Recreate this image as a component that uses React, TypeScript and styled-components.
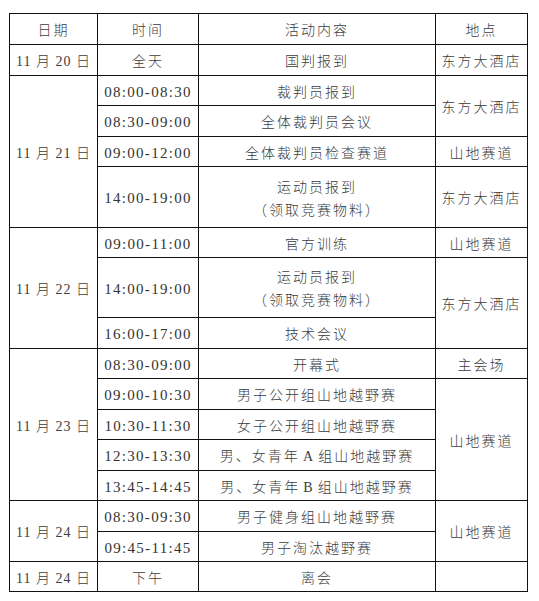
import React from "react";
import styled, { createGlobalStyle } from "styled-components";

const GlobalStyle = createGlobalStyle`
  html, body {
    margin: 0;
    padding: 0;
    background: #ffffff;
  }
  body {
    font-family: "Liberation Serif", "Noto Sans CJK SC", serif;
    color: #333333;
  }
`;

const Page = styled.div`
  padding: 13px 0 0 9px;
  width: 539px;
  height: 601px;
  box-sizing: border-box;
  background: #ffffff;
`;

const Schedule = styled.div`
  display: grid;
  width: 519px;
  box-sizing: border-box;
  grid-template-columns: 88px 101px 237px 92px;
  grid-template-rows: 31px 31px 30px 31px 30px 61px 30px 60px 31px 30px 31px 30px 31px 30px 31px 30px 30px;
  border-top: 1px solid #111111;
  border-left: 1px solid #111111;
`;

type Kind = "date" | "time" | "text";

const Cell = styled.div<{ $col: number; $span?: number; $kind?: Kind }>`
  grid-column: ${(p) => p.$col};
  grid-row: span ${(p) => p.$span ?? 1};
  box-sizing: border-box;
  border-right: 1px solid #111111;
  border-bottom: 1px solid #111111;
  display: flex;
  flex-direction: column;
  align-items: center;
  justify-content: center;
  padding-top: 3px;
  line-height: 23px;
  white-space: nowrap;
  font-weight: 300;
  color: ${(p) => (p.$kind === "time" ? "#333333" : "#3c3c3c")};
  font-size: ${(p) => (p.$kind === "time" ? "15px" : "14px")};
  letter-spacing: ${(p) =>
    p.$kind === "time" ? "1.3px" : p.$kind === "date" ? "1px" : "2px"};
`;

const Line = styled.span`
  display: block;
`;

type Row = {
  date?: { text: string; span: number };
  time: string;
  content: string[];
  place?: { text: string; span: number };
};

const rows: Row[] = [
  {
    date: { text: "11 月 20 日", span: 1 },
    time: "全天",
    content: ["国判报到"],
    place: { text: "东方大酒店", span: 1 },
  },
  {
    date: { text: "11 月 21 日", span: 4 },
    time: "08:00-08:30",
    content: ["裁判员报到"],
    place: { text: "东方大酒店", span: 2 },
  },
  { time: "08:30-09:00", content: ["全体裁判员会议"] },
  {
    time: "09:00-12:00",
    content: ["全体裁判员检查赛道"],
    place: { text: "山地赛道", span: 1 },
  },
  {
    time: "14:00-19:00",
    content: ["运动员报到", "（领取竞赛物料）"],
    place: { text: "东方大酒店", span: 1 },
  },
  {
    date: { text: "11 月 22 日", span: 3 },
    time: "09:00-11:00",
    content: ["官方训练"],
    place: { text: "山地赛道", span: 1 },
  },
  {
    time: "14:00-19:00",
    content: ["运动员报到", "（领取竞赛物料）"],
    place: { text: "东方大酒店", span: 2 },
  },
  { time: "16:00-17:00", content: ["技术会议"] },
  {
    date: { text: "11 月 23 日", span: 5 },
    time: "08:30-09:00",
    content: ["开幕式"],
    place: { text: "主会场", span: 1 },
  },
  {
    time: "09:00-10:30",
    content: ["男子公开组山地越野赛"],
    place: { text: "山地赛道", span: 4 },
  },
  { time: "10:30-11:30", content: ["女子公开组山地越野赛"] },
  { time: "12:30-13:30", content: ["男、女青年\u200AA\u200A组山地越野赛"] },
  { time: "13:45-14:45", content: ["男、女青年\u200AB\u200A组山地越野赛"] },
  {
    date: { text: "11 月 24 日", span: 2 },
    time: "08:30-09:30",
    content: ["男子健身组山地越野赛"],
    place: { text: "山地赛道", span: 2 },
  },
  { time: "09:45-11:45", content: ["男子淘汰越野赛"] },
  {
    date: { text: "11 月 24 日", span: 1 },
    time: "下午",
    content: ["离会"],
    place: { text: "", span: 1 },
  },
];

const isClock = (t: string) => /\d/.test(t);

export default function App() {
  return (
    <Page>
      <GlobalStyle />
      <Schedule>
        <Cell $col={1}>日期</Cell>
        <Cell $col={2}>时间</Cell>
        <Cell $col={3}>活动内容</Cell>
        <Cell $col={4}>地点</Cell>
        {rows.map((r, i) => (
          <React.Fragment key={i}>
            {r.date && (
              <Cell $col={1} $span={r.date.span} $kind="date">
                {r.date.text}
              </Cell>
            )}
            <Cell $col={2} $kind={isClock(r.time) ? "time" : "text"}>
              {r.time}
            </Cell>
            <Cell $col={3}>
              {r.content.map((c, j) => (
                <Line key={j}>{c}</Line>
              ))}
            </Cell>
            {r.place && (
              <Cell $col={4} $span={r.place.span}>
                {r.place.text}
              </Cell>
            )}
          </React.Fragment>
        ))}
      </Schedule>
    </Page>
  );
}
